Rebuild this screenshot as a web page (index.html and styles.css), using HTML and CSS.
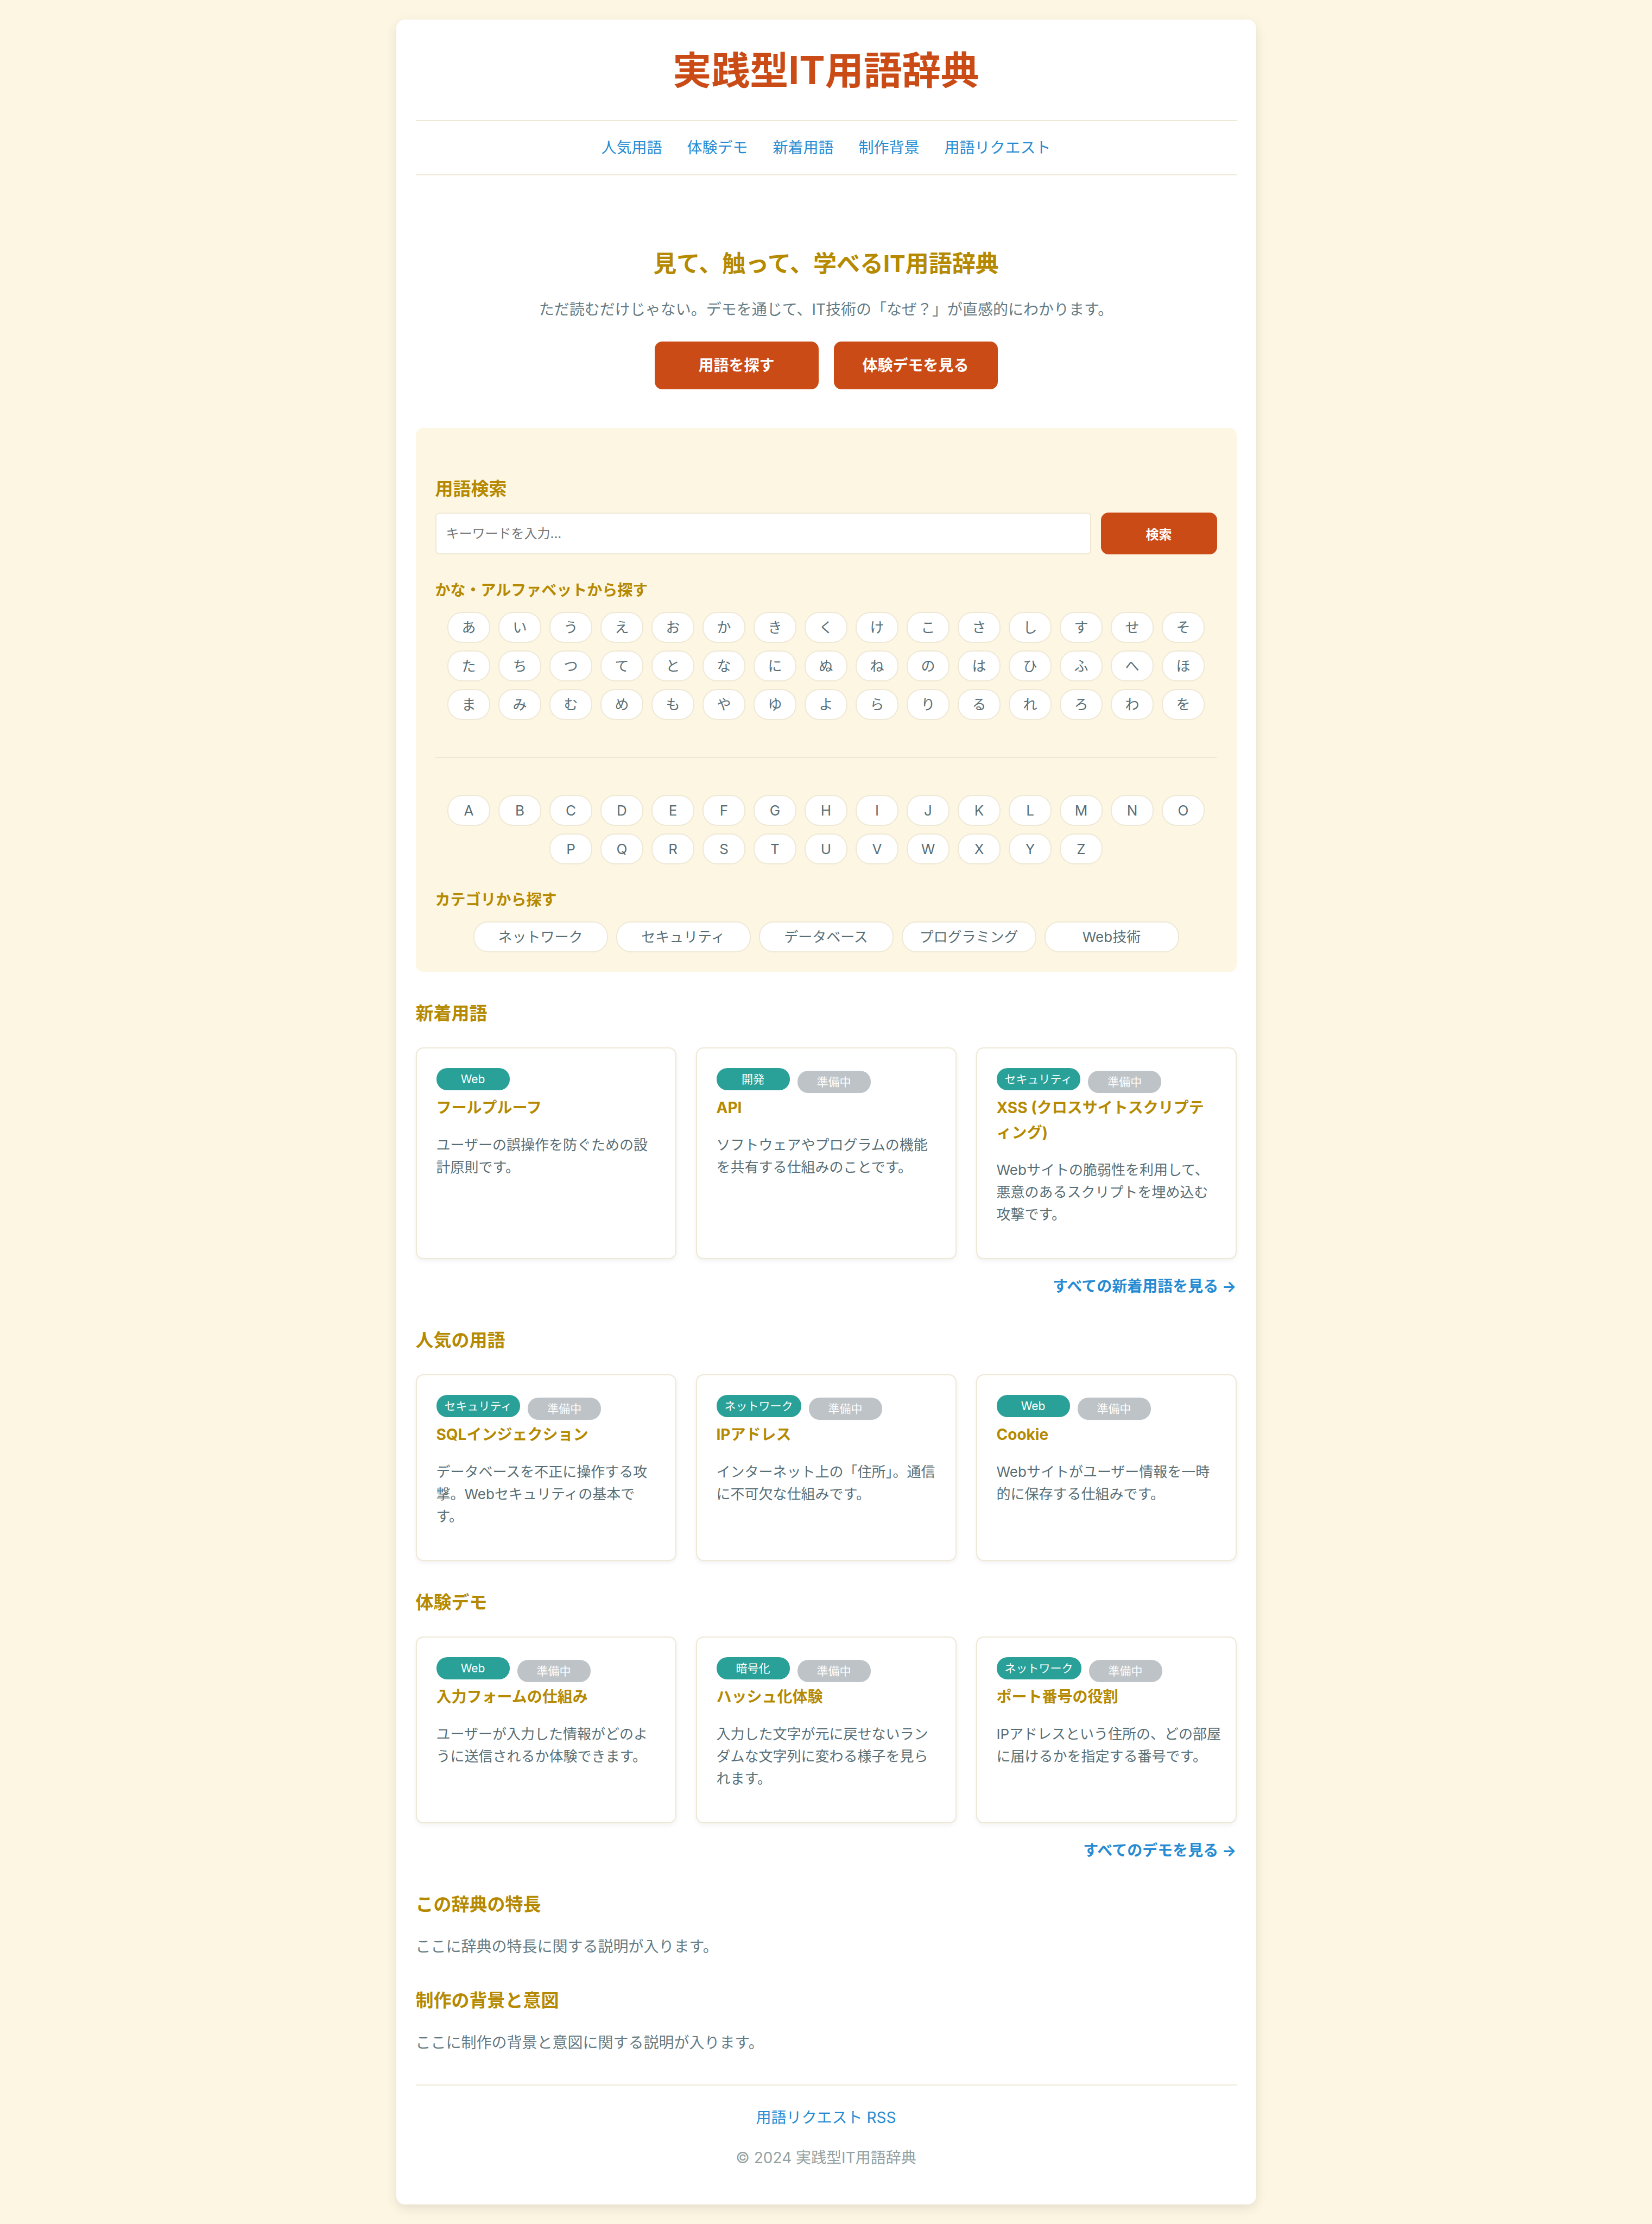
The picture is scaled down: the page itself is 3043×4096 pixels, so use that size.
FILE: index.html
```html
<!DOCTYPE html>
<html lang="ja">
<head>
<meta charset="UTF-8">
<meta name="viewport" content="width=device-width, initial-scale=1">
<title>実践型IT用語辞典</title>
<link rel="stylesheet" href="styles.css">
</head>
<body>
<div class="container">
  <header>
    <h1 class="site-title">実践型IT用語辞典</h1>
    <nav class="site-nav" aria-label="メイン">
      <a href="#popular">人気用語</a>
      <a href="#demos">体験デモ</a>
      <a href="#new">新着用語</a>
      <a href="#background">制作背景</a>
      <a href="#request">用語リクエスト</a>
    </nav>
  </header>

  <main>
    <section class="hero">
      <h2 class="hero-title">見て、触って、学べるIT用語辞典</h2>
      <p class="text">ただ読むだけじゃない。デモを通じて、IT技術の「なぜ？」が直感的にわかります。</p>
      <div class="hero-actions">
        <a class="button button-hero" href="#search">用語を探す</a>
        <a class="button button-hero" href="#demos">体験デモを見る</a>
      </div>
    </section>

    <section class="search" id="search">
      <h3 class="section-title">用語検索</h3>
      <form class="search-form">
        <input class="search-input" type="text" placeholder="キーワードを入力..." aria-label="キーワード">
        <button class="button button-search" type="submit">検索</button>
      </form>

      <h4 class="sub-title">かな・アルファベットから探す</h4>
      <div class="pills">
        <a class="pill" href="#">あ</a><a class="pill" href="#">い</a><a class="pill" href="#">う</a><a class="pill" href="#">え</a><a class="pill" href="#">お</a>
        <a class="pill" href="#">か</a><a class="pill" href="#">き</a><a class="pill" href="#">く</a><a class="pill" href="#">け</a><a class="pill" href="#">こ</a>
        <a class="pill" href="#">さ</a><a class="pill" href="#">し</a><a class="pill" href="#">す</a><a class="pill" href="#">せ</a><a class="pill" href="#">そ</a>
        <a class="pill" href="#">た</a><a class="pill" href="#">ち</a><a class="pill" href="#">つ</a><a class="pill" href="#">て</a><a class="pill" href="#">と</a>
        <a class="pill" href="#">な</a><a class="pill" href="#">に</a><a class="pill" href="#">ぬ</a><a class="pill" href="#">ね</a><a class="pill" href="#">の</a>
        <a class="pill" href="#">は</a><a class="pill" href="#">ひ</a><a class="pill" href="#">ふ</a><a class="pill" href="#">へ</a><a class="pill" href="#">ほ</a>
        <a class="pill" href="#">ま</a><a class="pill" href="#">み</a><a class="pill" href="#">む</a><a class="pill" href="#">め</a><a class="pill" href="#">も</a>
        <a class="pill" href="#">や</a><a class="pill" href="#">ゆ</a><a class="pill" href="#">よ</a>
        <a class="pill" href="#">ら</a><a class="pill" href="#">り</a><a class="pill" href="#">る</a><a class="pill" href="#">れ</a><a class="pill" href="#">ろ</a>
        <a class="pill" href="#">わ</a><a class="pill" href="#">を</a>
      </div>
      <hr class="divider">
      <div class="pills">
        <a class="pill" href="#">A</a><a class="pill" href="#">B</a><a class="pill" href="#">C</a><a class="pill" href="#">D</a><a class="pill" href="#">E</a>
        <a class="pill" href="#">F</a><a class="pill" href="#">G</a><a class="pill" href="#">H</a><a class="pill" href="#">I</a><a class="pill" href="#">J</a>
        <a class="pill" href="#">K</a><a class="pill" href="#">L</a><a class="pill" href="#">M</a><a class="pill" href="#">N</a><a class="pill" href="#">O</a>
        <a class="pill" href="#">P</a><a class="pill" href="#">Q</a><a class="pill" href="#">R</a><a class="pill" href="#">S</a><a class="pill" href="#">T</a>
        <a class="pill" href="#">U</a><a class="pill" href="#">V</a><a class="pill" href="#">W</a><a class="pill" href="#">X</a><a class="pill" href="#">Y</a>
        <a class="pill" href="#">Z</a>
      </div>

      <h4 class="sub-title">カテゴリから探す</h4>
      <div class="pills">
        <a class="pill pill-wide" href="#">ネットワーク</a>
        <a class="pill pill-wide" href="#">セキュリティ</a>
        <a class="pill pill-wide" href="#">データベース</a>
        <a class="pill pill-wide" href="#">プログラミング</a>
        <a class="pill pill-wide" href="#">Web技術</a>
      </div>
    </section>

    <section class="section" id="new">
      <h3 class="section-title">新着用語</h3>
      <div class="cards">
        <article class="card">
          <div class="badges"><span class="badge">Web</span></div>
          <h4 class="card-title">フールプルーフ</h4>
          <p class="card-text">ユーザーの誤操作を防ぐための設計原則です。</p>
        </article>
        <article class="card">
          <div class="badges"><span class="badge">開発</span><span class="badge badge-pending">準備中</span></div>
          <h4 class="card-title">API</h4>
          <p class="card-text">ソフトウェアやプログラムの機能を共有する仕組みのことです。</p>
        </article>
        <article class="card">
          <div class="badges"><span class="badge">セキュリティ</span><span class="badge badge-pending">準備中</span></div>
          <h4 class="card-title">XSS (クロスサイトスクリプティング)</h4>
          <p class="card-text">Webサイトの脆弱性を利用して、悪意のあるスクリプトを埋め込む攻撃です。</p>
        </article>
      </div>
      <p class="more"><a href="#">すべての新着用語を見る →</a></p>
    </section>

    <section class="section" id="popular">
      <h3 class="section-title">人気の用語</h3>
      <div class="cards">
        <article class="card">
          <div class="badges"><span class="badge">セキュリティ</span><span class="badge badge-pending">準備中</span></div>
          <h4 class="card-title">SQLインジェクション</h4>
          <p class="card-text">データベースを不正に操作する攻撃。Webセキュリティの基本です。</p>
        </article>
        <article class="card">
          <div class="badges"><span class="badge">ネットワーク</span><span class="badge badge-pending">準備中</span></div>
          <h4 class="card-title">IPアドレス</h4>
          <p class="card-text">インターネット上の「住所」。通信に不可欠な仕組みです。</p>
        </article>
        <article class="card">
          <div class="badges"><span class="badge">Web</span><span class="badge badge-pending">準備中</span></div>
          <h4 class="card-title">Cookie</h4>
          <p class="card-text">Webサイトがユーザー情報を一時的に保存する仕組みです。</p>
        </article>
      </div>
    </section>

    <section class="section" id="demos">
      <h3 class="section-title">体験デモ</h3>
      <div class="cards">
        <article class="card">
          <div class="badges"><span class="badge">Web</span><span class="badge badge-pending">準備中</span></div>
          <h4 class="card-title">入力フォームの仕組み</h4>
          <p class="card-text">ユーザーが入力した情報がどのように送信されるか体験できます。</p>
        </article>
        <article class="card">
          <div class="badges"><span class="badge">暗号化</span><span class="badge badge-pending">準備中</span></div>
          <h4 class="card-title">ハッシュ化体験</h4>
          <p class="card-text">入力した文字が元に戻せないランダムな文字列に変わる様子を見られます。</p>
        </article>
        <article class="card">
          <div class="badges"><span class="badge">ネットワーク</span><span class="badge badge-pending">準備中</span></div>
          <h4 class="card-title">ポート番号の役割</h4>
          <p class="card-text"><span class="keep">IPアドレスという住所の、どの部屋</span><br>に届けるかを指定する番号です。</p>
        </article>
      </div>
      <p class="more"><a href="#">すべてのデモを見る →</a></p>
    </section>

    <section class="section" id="features">
      <h3 class="section-title">この辞典の特長</h3>
      <p class="text section-text">ここに辞典の特長に関する説明が入ります。</p>
    </section>

    <section class="section" id="background">
      <h3 class="section-title">制作の背景と意図</h3>
      <p class="text section-text">ここに制作の背景と意図に関する説明が入ります。</p>
    </section>
  </main>

  <footer class="footer" id="request">
    <p class="footer-links"><a href="#">用語リクエスト</a> <a href="#">RSS</a></p>
    <p class="copyright">© 2024 実践型IT用語辞典</p>
  </footer>
</div>
</body>
</html>
```
FILE: styles.css
```css
:root {
  --base: #fdf6e3;
  --line: #eee8d5;
  --text: #657b83;
  --text-strong: #586e75;
  --gold: #b58900;
  --orange: #cb4b16;
  --blue: #268bd2;
  --teal: #2aa198;
  --muted: #93a1a1;
  --pending: #bdc3c7;
}

* {
  box-sizing: border-box;
}

body {
  margin: 0;
  padding: 36px;
  background: var(--base);
  color: var(--text);
  font-family: Inter, "Noto Sans CJK JP", sans-serif;
  font-size: 28px;
  line-height: 46px;
}

h1, h2, h3, h4, p {
  margin: 0;
}

a {
  color: var(--blue);
  text-decoration: none;
}

.container {
  max-width: 1584px;
  margin: 0 auto;
  padding: 36px;
  background: #fff;
  border-radius: 16px;
  box-shadow: 0 7px 21px rgba(0, 0, 0, 0.1);
}

/* Header */
.site-title {
  margin-bottom: 35px;
  color: var(--orange);
  font-size: 71px;
  line-height: 114px;
  text-align: center;
}

.site-nav {
  display: flex;
  flex-wrap: wrap;
  justify-content: center;
  gap: 46px;
  padding: 26px 0;
  border-top: 2px solid var(--line);
  border-bottom: 2px solid var(--line);
}

/* Hero */
.hero {
  padding: 128px 0 71px;
  text-align: center;
}

.hero-title {
  margin-bottom: 28px;
  color: var(--gold);
  font-size: 43px;
  line-height: 68px;
}

.hero-actions {
  display: flex;
  flex-wrap: wrap;
  justify-content: center;
  gap: 28px;
  margin-top: 36px;
}

.button {
  border: 0;
  border-radius: 14px;
  background: var(--orange);
  color: #fff;
  font-family: inherit;
  font-weight: 700;
  text-align: center;
}

.button-hero {
  min-width: 302px;
  padding: 21px 36px;
}

.button-search {
  width: 214px;
  font-size: 24px;
}

/* Search */
.search {
  padding: 85px 36px 36px;
  background: var(--base);
  border-radius: 14px;
}

.section-title {
  color: var(--gold);
  font-size: 33px;
  line-height: 54px;
}

.search-form {
  display: flex;
  gap: 18px;
  margin: 17px 0 43px;
}

.search-input {
  flex: 1;
  min-width: 0;
  height: 77px;
  padding: 0 18px;
  border: 2px solid var(--line);
  border-radius: 7px;
  background: #fff;
  color: var(--text-strong);
  font-family: inherit;
  font-size: 24px;
}

.search-input::placeholder {
  color: #757575;
}

.sub-title {
  margin-bottom: 17px;
  color: var(--gold);
  font-size: 28px;
  line-height: 46px;
}

.pills {
  display: flex;
  flex-wrap: wrap;
  justify-content: center;
  gap: 14px 15px;
}

.pill {
  width: 79px;
  padding: 6px 0;
  border: 2px solid var(--line);
  border-radius: 27px;
  background: #fff;
  color: var(--text-strong);
  font-size: 26px;
  line-height: 41px;
  text-align: center;
}

.pill-wide {
  width: 248px;
}

.divider {
  height: 2px;
  margin: 68px 0;
  border: 0;
  background: var(--line);
}

.pills + .sub-title {
  margin-top: 42px;
}

/* Sections and cards */
.section {
  margin-top: 49px;
}

.cards {
  display: grid;
  grid-template-columns: repeat(3, minmax(0, 1fr));
  gap: 36px;
  margin-top: 36px;
}

.card {
  padding: 36px;
  border: 2px solid var(--line);
  border-radius: 14px;
  background: #fff;
  box-shadow: 0 4px 9px rgba(0, 0, 0, 0.05);
}

.badges {
  display: flex;
  gap: 14px;
  height: 41px;
  margin-bottom: 9px;
}

.badge {
  min-width: 135px;
  height: 41px;
  padding: 0 15px;
  border-radius: 20px;
  background: var(--teal);
  color: #fff;
  font-size: 21px;
  line-height: 41px;
  text-align: center;
}

.badge-pending {
  margin-top: 5px;
  background: var(--pending);
}

.card-title {
  color: var(--gold);
  font-size: 28px;
  line-height: 46px;
}

.card-text {
  margin: 25px 0 24px;
  color: var(--text-strong);
  font-size: 26px;
  line-height: 41px;
}

.keep {
  white-space: nowrap;
}

.more {
  margin-top: 27px;
  font-weight: 700;
  text-align: right;
}

.section-text {
  margin-top: 28px;
}

/* Footer */
.footer {
  margin-top: 54px;
  padding: 36px 0 27px;
  border-top: 2px solid var(--line);
  text-align: center;
}

.copyright {
  margin-top: 28px;
  color: var(--muted);
}
```
